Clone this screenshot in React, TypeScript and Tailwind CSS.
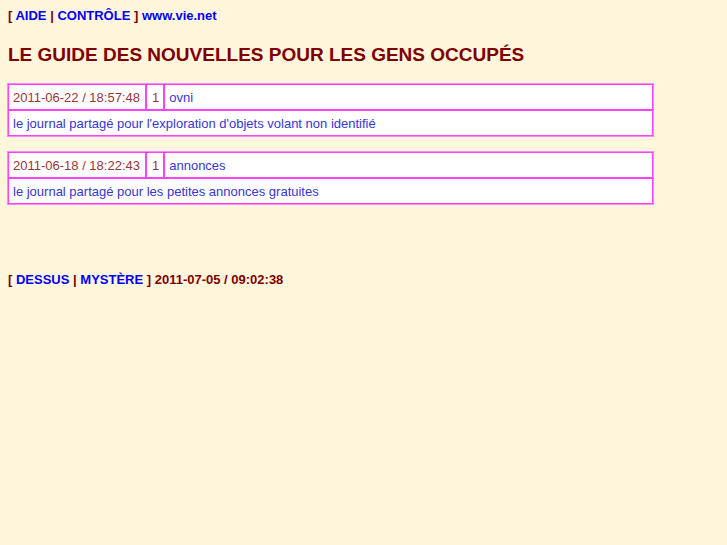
import React from "react";

const rows = [
  {
    date: "2011-06-22 / 18:57:48",
    n: "1",
    name: "ovni",
    desc: "le journal partagé pour l'exploration d'objets volant non identifié",
  },
  {
    date: "2011-06-18 / 18:22:43",
    n: "1",
    name: "annonces",
    desc: "le journal partagé pour les petites annonces gratuites",
  },
];

export default function App() {
  return (
    <div
      className="min-h-[545px] bg-[#fff6dc] px-2 pt-[8px] text-[#800000]"
      style={{ fontFamily: '"Liberation Sans", Arial, sans-serif' }}
    >
      <div className="text-[13px] font-bold leading-[16px]">
        [ <span className="text-[#0000ff]">AIDE</span> |{" "}
        <span className="text-[#0000ff]">CONTRÔLE</span> ]{" "}
        <span className="text-[#0000ff]">www.vie.net</span>
      </div>
      <h1 className="mt-[20px] text-[19px] font-bold leading-[22px]">
        LE GUIDE DES NOUVELLES POUR LES GENS OCCUPÉS
      </h1>
      <div className="mt-[17px] flex flex-col gap-[14px]">
        {rows.map((r) => (
          <table
            key={r.name}
            className="w-[647px] -ml-px border border-[#ff88ff] bg-white text-[13px] leading-[15px]"
            style={{ borderCollapse: "separate", borderSpacing: 0 }}
          >
            <tbody>
              <tr className="h-[26px]">
                <td className="w-[1%] whitespace-nowrap border border-[#ff40ff] pl-[4px] pr-[5px] text-[#a03333]">
                  {r.date}
                </td>
                <td className="w-[1%] border border-[#ff40ff] pl-[5px] pr-[4px] text-[#a03333]">
                  {r.n}
                </td>
                <td className="border border-[#ff40ff] px-[4px] text-[#3535dd]">
                  {r.name}
                </td>
              </tr>
              <tr className="h-[26px]">
                <td
                  colSpan={3}
                  className="border border-[#ff40ff] px-[4px] text-[#3535dd]"
                >
                  {r.desc}
                </td>
              </tr>
            </tbody>
          </table>
        ))}
      </div>
      <div className="mt-[67px] text-[13px] font-bold leading-[16px]">
        [ <span className="text-[#0000ff]">DESSUS</span> |{" "}
        <span className="text-[#0000ff]">MYSTÈRE</span> ] 2011-07-05 / 09:02:38
      </div>
    </div>
  );
}
